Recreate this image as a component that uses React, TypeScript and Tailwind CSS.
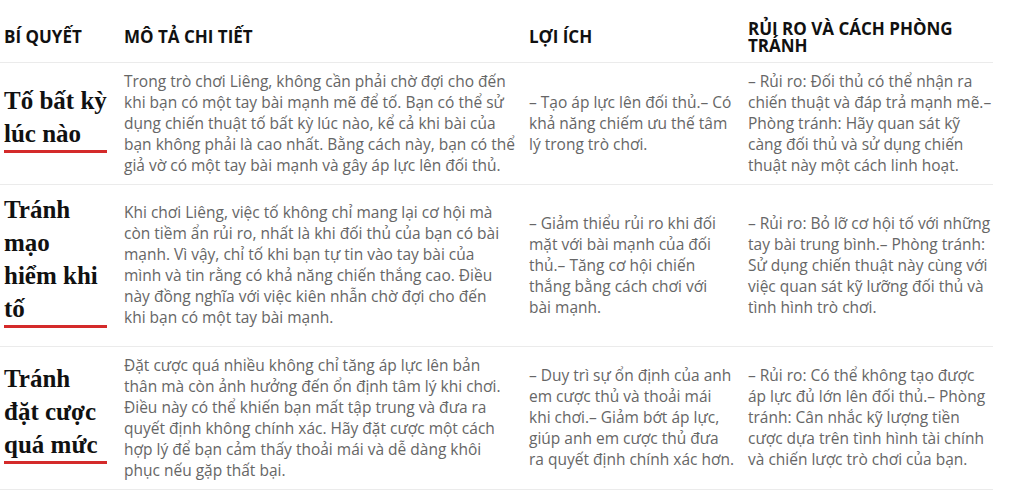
import React from "react";

const rows: { title: string; desc: React.ReactNode; benefit: React.ReactNode; risk: string }[] = [
  {
    title: "Tố bất kỳ lúc nào",
    desc: "Trong trò chơi Liêng, không cần phải chờ đợi cho đến khi bạn có một tay bài mạnh mẽ để tố. Bạn có thể sử dụng chiến thuật tố bất kỳ lúc nào, kể cả khi bài của bạn không phải là cao nhất. Bằng cách này, bạn có thể giả vờ có một tay bài mạnh và gây áp lực lên đối thủ.",
    benefit: "– Tạo áp lực lên đối thủ.– Có khả năng chiếm ưu thế tâm lý trong trò chơi.",
    risk: "– Rủi ro: Đối thủ có thể nhận ra chiến thuật và đáp trả mạnh mẽ.– Phòng tránh: Hãy quan sát kỹ càng đối thủ và sử dụng chiến thuật này một cách linh hoạt.",
  },
  {
    title: "Tránh mạo hiểm khi tố",
    desc: (
      <>
        Khi chơi Liêng, việc tố không chỉ mang lại cơ hội mà còn tiềm ẩn rủi ro, nhất là khi đối thủ của bạn có bài mạnh. Vì vậy, chỉ tố khi bạn tự tin vào tay bài của mình và tin rằng có khả năng chiến thắng cao. Điều này đồng nghĩa với việc kiên nhẫn chờ đợi cho đến
        <br />
        khi bạn có một tay bài mạnh.
      </>
    ),
    benefit: (
      <>
        – Giảm thiểu rủi ro khi đối mặt với bài mạnh của đối thủ.– Tăng cơ hội chiến
        <br />
        thắng bằng cách chơi với
        <br />
        bài mạnh.
      </>
    ),
    risk: "– Rủi ro: Bỏ lỡ cơ hội tố với những tay bài trung bình.– Phòng tránh: Sử dụng chiến thuật này cùng với việc quan sát kỹ lưỡng đối thủ và tình hình trò chơi.",
  },
  {
    title: "Tránh đặt cược quá mức",
    desc: "Đặt cược quá nhiều không chỉ tăng áp lực lên bản thân mà còn ảnh hưởng đến ổn định tâm lý khi chơi. Điều này có thể khiến bạn mất tập trung và đưa ra quyết định không chính xác. Hãy đặt cược một cách hợp lý để bạn cảm thấy thoải mái và dễ dàng khôi phục nếu gặp thất bại.",
    benefit: (
      <>
        – Duy trì sự ổn định của anh em cược thủ và thoải mái
        <br />
        khi chơi.– Giảm bớt áp lực, giúp anh em cược thủ đưa
        <br />
        ra quyết định chính xác hơn.
      </>
    ),
    risk: "– Rủi ro: Có thể không tạo được áp lực đủ lớn lên đối thủ.– Phòng tránh: Cân nhắc kỹ lượng tiền cược dựa trên tình hình tài chính và chiến lược trò chơi của bạn.",
  },
];

export default function App() {
  return (
    <div className="w-[1024px] h-[491px] bg-white overflow-hidden pt-[12px] font-['Open_Sans',sans-serif]">
      <table className="table-fixed border-collapse w-[993px]">
        <colgroup>
          <col className="w-[120px]" />
          <col className="w-[405px]" />
          <col className="w-[219px]" />
          <col className="w-[249px]" />
        </colgroup>
        <thead>
          <tr className="h-[50px] border-b border-[#ebebeb]">
            <th className="text-left align-middle pl-[4px] text-[17px] font-bold text-[#111] leading-[17px]">BÍ QUYẾT</th>
            <th className="text-left align-middle pl-[4px] text-[17px] font-bold text-[#111] leading-[17px]">MÔ TẢ CHI TIẾT</th>
            <th className="text-left align-middle pl-[4px] text-[17px] font-bold text-[#111] leading-[17px]">LỢI ÍCH</th>
            <th className="text-left align-middle pl-[4px] pr-[20px] text-[17px] font-bold text-[#111] leading-[17px]">RỦI RO VÀ CÁCH PHÒNG TRÁNH</th>
          </tr>
        </thead>
        <tbody>
          {rows.map((r, i) => (
            <tr key={i} className="border-b border-[#ebebeb]">
              <td className="align-middle pl-[4px] pr-[13px] py-[8px]">
                <div className="font-['Liberation_Serif',serif] font-bold text-[25px] leading-[33px] text-[#111] border-b-[3px] border-[#d42a2a] mb-[10px]">
                  {r.title}
                </div>
              </td>
              <td className="align-middle pl-[4px] pr-[10px] py-[8px] text-[15.5px] leading-[21px] text-[#666]">{r.desc}</td>
              <td className="align-middle pl-[4px] pr-[3px] py-[8px] text-[15.5px] leading-[21px] text-[#666]">{r.benefit}</td>
              <td className="align-middle pl-[4px] pr-[0px] py-[8px] text-[15.5px] leading-[21px] text-[#666]">{r.risk}</td>
            </tr>
          ))}
        </tbody>
      </table>
    </div>
  );
}
